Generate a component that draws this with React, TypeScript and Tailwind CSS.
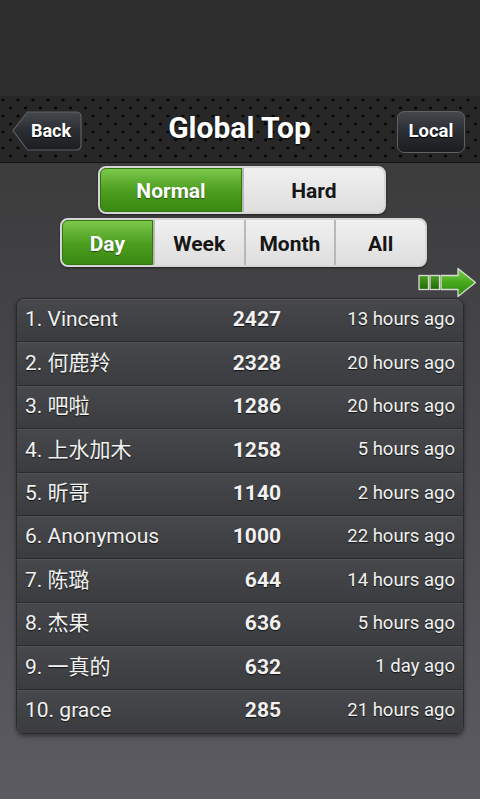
import React from "react";

const rows = [
  ["1. Vincent", "2427", "13 hours ago"],
  ["2. 何鹿羚", "2328", "20 hours ago"],
  ["3. 吧啦", "1286", "20 hours ago"],
  ["4. 上水加木", "1258", "5 hours ago"],
  ["5. 昕哥", "1140", "2 hours ago"],
  ["6. Anonymous", "1000", "22 hours ago"],
  ["7. 陈璐", "644", "14 hours ago"],
  ["8. 杰果", "636", "5 hours ago"],
  ["9. 一真的", "632", "1 day ago"],
  ["10. grace", "285", "21 hours ago"],
];

function Seg({
  label,
  active,
  first,
  last,
}: {
  label: string;
  active?: boolean;
  first?: boolean;
  last?: boolean;
}) {
  const rounded = first ? "rounded-l-[6px]" : last ? "rounded-r-[6px]" : "";
  return (
    <div
      className={
        "flex-1 flex items-center justify-center pt-[4px] text-[21px] font-bold " +
        rounded +
        " " +
        (active
          ? "bg-gradient-to-b from-[#7cc84a] via-[#4e9f20] to-[#3a8912] text-white border border-[#2f740c] [text-shadow:0_1px_1px_rgba(0,0,0,0.45)]"
          : "bg-gradient-to-b from-[#f0f0f0] to-[#dedede] text-[#161616]")
      }
    >
      {label}
    </div>
  );
}

export default function App() {
  return (
    <div className="w-[480px] h-[799px] flex flex-col overflow-hidden font-['Roboto','Noto_Sans_CJK_SC',sans-serif] bg-gradient-to-b from-[#343434] to-[#5c5b62]">
      <div className="h-[96px] shrink-0 bg-[#2e2e2e]" />
      <header className="h-[67px] shrink-0 flex items-center justify-between pl-[12px] pr-[15px] border-b border-[#121212] bg-[#272727] bg-[radial-gradient(circle,#060606_1.2px,transparent_1.8px),radial-gradient(circle,#060606_1.2px,transparent_1.8px)] bg-[length:15px_16px] bg-[position:3px_4px,10.5px_12px]">
        <div className="relative w-[70px] h-[40px] mt-[3px] flex items-center justify-center pl-[8px] text-white font-bold text-[18px] [text-shadow:0_1px_1px_#000]">
          <svg className="absolute inset-0" width="70" height="40" viewBox="0 0 70 40">
            <defs>
              <linearGradient id="bk" x1="0" y1="0" x2="0" y2="1">
                <stop offset="0" stopColor="#44474c" />
                <stop offset="0.5" stopColor="#2a2d31" />
                <stop offset="1" stopColor="#1b1d20" />
              </linearGradient>
            </defs>
            <path
              d="M1 19.5 L15.5 1 H64 Q69 1 69 6 V34 Q69 39 64 39 H15.5 Z"
              fill="url(#bk)"
              stroke="#5d6066"
              strokeWidth="1.2"
            />
          </svg>
          <span className="relative">Back</span>
        </div>
        <div className="text-white font-bold text-[30px] mb-[3px] [text-shadow:0_1px_2px_#000]">
          Global Top
        </div>
        <div className="w-[68px] h-[42px] mt-[5px] rounded-[7px] border border-[#5d6066] bg-gradient-to-b from-[#44474c] via-[#2a2d31] to-[#1b1d20] flex items-center justify-center text-white font-bold text-[18.5px] [text-shadow:0_1px_1px_#000]">
          Local
        </div>
      </header>

      <div className="flex flex-col items-center pt-[3px]">
        <div className="w-[288px] h-[48px] flex gap-[2px] rounded-[8px] border-2 border-[#d6d6d6] bg-[#b8b8b8] shadow-[0_1px_2px_rgba(0,0,0,0.5)] ml-[4px]">
          <Seg label="Normal" active first />
          <Seg label="Hard" last />
        </div>
        <div className="w-[367px] h-[49px] mt-[4px] flex gap-[2px] rounded-[8px] border-2 border-[#d6d6d6] bg-[#b8b8b8] shadow-[0_1px_2px_rgba(0,0,0,0.5)] ml-[7px]">
          <Seg label="Day" active first />
          <Seg label="Week" />
          <Seg label="Month" />
          <Seg label="All" last />
        </div>
      </div>

      <div className="h-[31px] flex justify-end pr-[3px]">
        <svg width="60" height="31" viewBox="0 0 60 31">
          <defs>
            <linearGradient id="ar" x1="0" y1="0" x2="0" y2="1">
              <stop offset="0" stopColor="#7fd24a" />
              <stop offset="0.5" stopColor="#45a81c" />
              <stop offset="1" stopColor="#2d8a0c" />
            </linearGradient>
            <linearGradient id="sq" x1="0" y1="0" x2="0" y2="1">
              <stop offset="0" stopColor="#4aa020" />
              <stop offset="1" stopColor="#1f6a08" />
            </linearGradient>
          </defs>
          <rect x="2" y="8.5" width="9.5" height="14" fill="url(#sq)" stroke="#d8dcd4" strokeWidth="1.3" />
          <rect x="13" y="8.5" width="9.5" height="14" fill="url(#sq)" stroke="#d8dcd4" strokeWidth="1.3" />
          <path
            d="M24 8.5 H41 V1.5 L58.5 15.5 L41 29.5 V22.5 H24 Z"
            fill="url(#ar)"
            stroke="#d8dcd4"
            strokeWidth="1.3"
            strokeLinejoin="round"
          />
        </svg>
      </div>

      <div className="mx-[16px] w-[448px] rounded-[8px] overflow-hidden border border-[#2b2b2d] shadow-[0_2px_4px_rgba(0,0,0,0.45)]">
        {rows.map(([name, score, time], i) => (
          <div
            key={i}
            className={
              "h-[43.4px] grid grid-cols-[1fr_auto_174px] items-center pl-[8px] pr-[8px] text-[#f2f2f2] [text-shadow:0_1px_1px_rgba(0,0,0,0.7)] bg-gradient-to-b from-[#47484b] to-[#3b3c3f] " +
              (i < rows.length - 1 ? "border-b border-[#2a2a2c] shadow-[inset_0_1px_0_#525356]" : "shadow-[inset_0_1px_0_#525356]")
            }
          >
            <div className="text-[21px] whitespace-nowrap">{name}</div>
            <div className="text-[21px] font-bold text-right">{score}</div>
            <div className="text-[18.5px] text-right">{time}</div>
          </div>
        ))}
      </div>
    </div>
  );
}
